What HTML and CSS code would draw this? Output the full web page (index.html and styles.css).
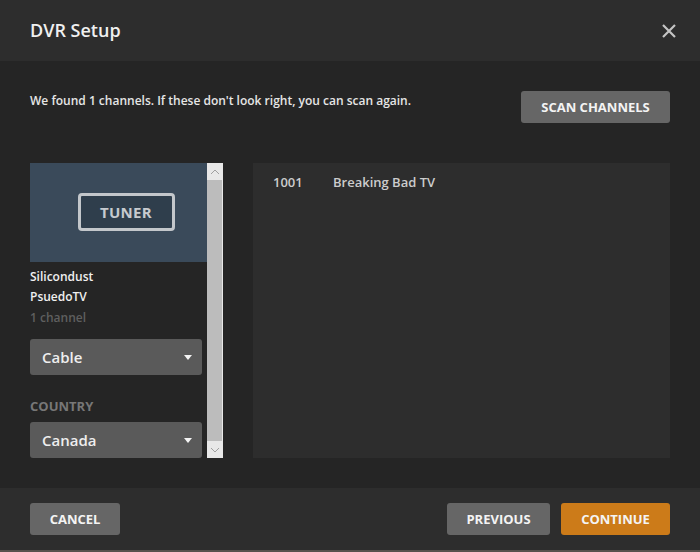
FILE: index.html
```html
<!DOCTYPE html>
<html>
<head>
<meta charset="utf-8">
<link rel="stylesheet" href="styles.css">
</head>
<body>
<div class="modal">
  <header class="header">
    <h1 class="title">DVR Setup</h1>
    <button class="close" aria-label="Close">
      <svg width="14" height="14" viewBox="0 0 14 14"><path d="M1 1L13 13M13 1L1 13" stroke="#c4c4c4" stroke-width="2.2" fill="none"/></svg>
    </button>
  </header>
  <main class="body">
    <div class="intro">
      <p class="intro-text">We found 1 channels. If these don't look right, you can scan again.</p>
      <button class="btn btn-gray scan">SCAN CHANNELS</button>
    </div>
    <div class="content">
      <div class="side-wrap">
        <div class="side">
          <div class="tuner-art"><span class="tuner-box">TUNER</span></div>
          <div class="dev-name dev-first">Silicondust</div>
          <div class="dev-name">PsuedoTV</div>
          <div class="dev-count">1 channel</div>
          <div class="select"><span>Cable</span><i class="caret"></i></div>
          <div class="label">COUNTRY</div>
          <div class="select"><span>Canada</span><i class="caret"></i></div>
        </div>
        <div class="scrollbar">
          <div class="sb-arrow"><svg width="10" height="6" viewBox="0 0 10 6"><path d="M1 5L5 1L9 5" stroke="#a0a0a0" stroke-width="1" fill="none"/></svg></div>
          <div class="sb-thumb"></div>
          <div class="sb-arrow"><svg width="10" height="6" viewBox="0 0 10 6"><path d="M1 1L5 5L9 1" stroke="#a0a0a0" stroke-width="1" fill="none"/></svg></div>
        </div>
      </div>
      <div class="channels">
        <div class="channel"><span class="ch-num">1001</span><span class="ch-name">Breaking Bad TV</span></div>
      </div>
    </div>
  </main>
  <footer class="footer">
    <button class="btn btn-gray cancel">CANCEL</button>
    <div class="footer-right">
      <button class="btn btn-gray prev">PREVIOUS</button>
      <button class="btn btn-orange cont">CONTINUE</button>
    </div>
  </footer>
  <div class="bottom-strip"></div>
</div>
</body>
</html>
```

FILE: styles.css
```css
* { box-sizing: border-box; }
html, body { margin: 0; padding: 0; }
body {
  width: 700px;
  height: 552px;
  background: #252525;
  font-family: "Open Sans", "Noto Sans", sans-serif;
  overflow: hidden;
}
.modal {
  display: flex;
  flex-direction: column;
  height: 552px;
}
.header {
  height: 61px;
  background: #2d2d2d;
  display: flex;
  align-items: center;
  justify-content: space-between;
  padding: 0 24px 0 30px;
}
.title {
  margin: 0;
  font-size: 18px;
  font-weight: 600;
  color: #f0f0f0;
  padding-bottom: 1px;
}
.close {
  background: none;
  border: 0;
  padding: 0;
  width: 14px;
  height: 14px;
  display: flex;
}
.body {
  flex: 1;
  background: #252525;
  padding: 30px 30px 0 30px;
  display: flex;
  flex-direction: column;
}
.intro {
  display: flex;
  justify-content: space-between;
  align-items: flex-start;
  height: 72px;
}
.intro-text {
  margin: 2px 0 0;
  font-size: 12px;
  font-weight: 600;
  color: #e6e6e6;
  line-height: 16px;
}
.btn {
  border: 0;
  border-radius: 3px;
  font-family: "Open Sans", "Noto Sans", sans-serif;
  font-weight: 700;
  font-size: 13px;
  color: #f4f4f4;
  height: 32px;
  padding: 0;
  cursor: pointer;
}
.btn-gray { background: #666666; }
.btn-orange { background: #cc7b19; }
.scan { width: 149px; }
.content {
  display: flex;
  height: 295px;
}
.side-wrap {
  display: flex;
  width: 193px;
}
.side {
  width: 177px;
  display: flex;
  flex-direction: column;
}
.tuner-art {
  height: 99px;
  background: #3a4a5a;
  display: flex;
  align-items: center;
  justify-content: center;
  padding: 0 0 2px 15px;
}
.tuner-box {
  width: 97px;
  height: 38px;
  border: 3px solid #c3c7cb;
  border-radius: 4px;
  background: #2f3e4c;
  color: #c6cacf;
  font-weight: 700;
  font-size: 15px;
  display: flex;
  align-items: center;
  justify-content: center;
  letter-spacing: 0.3px;
}
.dev-name {
  font-size: 12px;
  font-weight: 600;
  color: #f0f0f0;
  line-height: 20px;
}
.dev-first { margin-top: 5px; }
.dev-count {
  margin-top: 1px;
  font-size: 12px;
  font-weight: 600;
  color: #5f5f5f;
  line-height: 20px;
}
.select {
  width: 172px;
  height: 36px;
  background: #5a5a5a;
  border-radius: 3px;
  display: flex;
  align-items: center;
  justify-content: space-between;
  padding: 0 10px 0 12px;
  color: #eeeeee;
  font-size: 15px;
  font-weight: 600;
}
.dev-count + .select { margin-top: 11px; }
.caret {
  width: 0;
  height: 0;
  border-left: 4px solid transparent;
  border-right: 4px solid transparent;
  border-top: 5px solid #f4f4f4;
}
.label {
  margin-top: 23px;
  margin-bottom: 8px;
  font-size: 13px;
  font-weight: 700;
  color: #777777;
  line-height: 16px;
}
.scrollbar {
  width: 16px;
  background: #e8e8e8;
  display: flex;
  flex-direction: column;
}
.sb-arrow {
  height: 17px;
  display: flex;
  align-items: center;
  justify-content: center;
}
.sb-thumb {
  flex: 1;
  background: #bcbcbc;
  margin: 0 1px 0 0;
}
.channels {
  margin-left: 30px;
  flex: 1;
  background: #2d2d2d;
  padding: 9px 20px;
}
.channel {
  display: flex;
  font-size: 13px;
  font-weight: 600;
  color: #cccccc;
  line-height: 20px;
}
.ch-num { width: 60px; }
.footer {
  height: 62px;
  margin-top: 30px;
  background: #2d2d2d;
  display: flex;
  align-items: center;
  justify-content: space-between;
  padding: 0 30px;
}
.footer-right { display: flex; gap: 11px; }
.cancel { width: 90px; }
.prev { width: 103px; }
.cont { width: 109px; }
.bottom-strip {
  height: 2px;
  background: #57524d;
}
```
